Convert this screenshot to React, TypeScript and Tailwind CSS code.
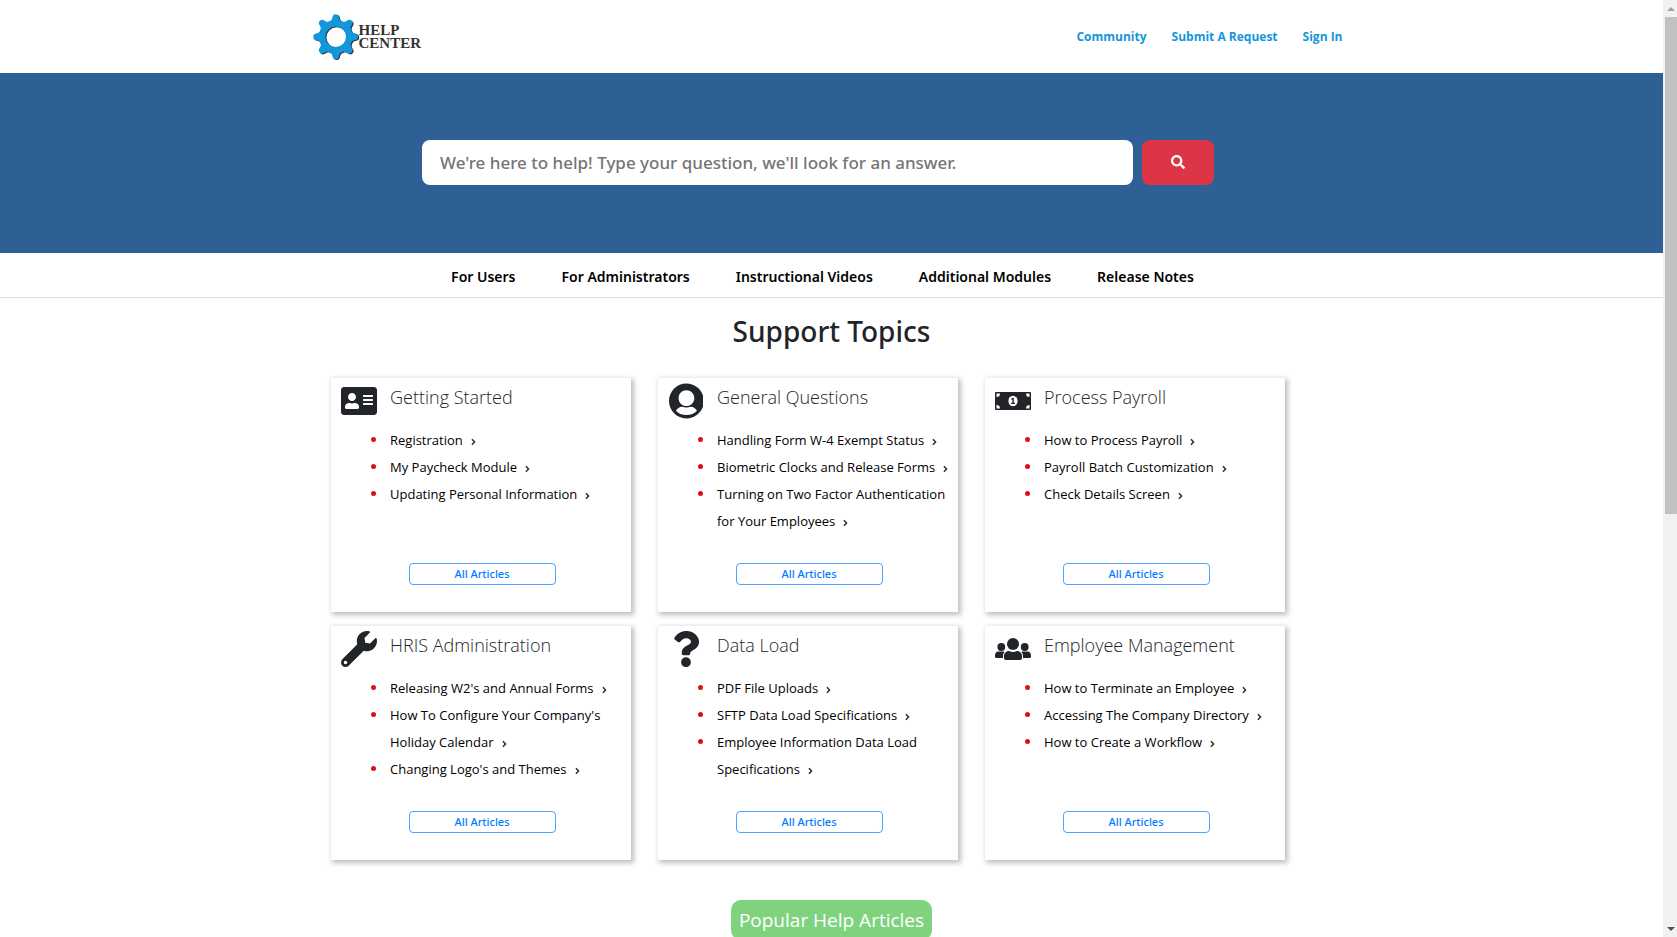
import React from "react";
import {
  FaAddressCard,
  FaAngleRight,
  FaQuestion,
  FaSearch,
  FaWrench,
} from "react-icons/fa";

type Topic = {
  title: string;
  icon: React.ReactNode;
  articles: string[];
};

const UserCircleIcon = () => (
  <svg viewBox="0 0 496 512" className="h-9" fill="currentColor">
    <path d="M248 8C111 8 0 119 0 256s111 248 248 248 248-111 248-248S385 8 248 8zm0 448c-62 0-116-22-150-62 18-32 50-54 88-56 20 7 41 11 62 11s42-4 62-11c38 2 70 24 88 56-34 40-88 62-150 62zm0-352c62 0 112 50 112 112s-50 112-112 112-112-50-112-112 50-112 112-112z" />
  </svg>
);

const MoneyIcon = () => (
  <svg viewBox="0 0 36 18" className="w-9">
    <rect width="36" height="18" rx="1" fill="currentColor" />
    <path
      d="M1.5 1.5h3.5a3.5 3.5 0 0 1-3.5 3.5zM34.500 1.500v3.500a3.500 3.500 0 0 1-3.500-3.500zM1.500 16.500v-3.500a3.500 3.500 0 0 1 3.500 3.500zM34.500 16.500h-3.500a3.500 3.500 0 0 1 3.500-3.500z"
      fill="#fff"
    />
    <ellipse cx="18" cy="9" rx="4.600" ry="5.200" fill="#fff" />
    <path d="M16.200 6.800l1.600-1h1v5h1.200v1.200h-3.900v-1.200h1.300V7.400l-1.200.4z" fill="currentColor" />
  </svg>
);

const UsersIcon = () => (
  <svg viewBox="0 0 36 22" className="w-9" fill="currentColor">
    <circle cx="18" cy="6" r="6" />
    <circle cx="6.300" cy="9" r="3.900" />
    <circle cx="29.700" cy="9" r="3.900" />
    <path d="M9 18.500c0-3.200 2-5.500 5-5.500 1.300.7 2.600 1 4 1s2.700-.3 4-1c3 0 5 2.300 5 5.500V20c0 1.200-.8 2-2 2H11c-1.200 0-2-.8-2-2z" />
    <path d="M0 17.500C0 15.200 1.600 13.600 3.600 13.600h4.800c.4 0 .8.100 1.200.2C8.500 15 8 16.500 8 18.500V20H1.200C.5 20 0 19.500 0 18.800zM36 17.500c0-2.300-1.600-3.900-3.600-3.900h-4.800c-.4 0-.8.100-1.200.2 1.100 1.200 1.600 2.700 1.600 4.700V20h6.800c.7 0 1.200-.5 1.200-1.200z" />
  </svg>
);

const topics: Topic[] = [
  {
    title: "Getting Started",
    icon: <FaAddressCard className="size-9" />,
    articles: ["Registration", "My Paycheck Module", "Updating Personal Information"],
  },
  {
    title: "General Questions",
    icon: <UserCircleIcon />,
    articles: [
      "Handling Form W-4 Exempt Status",
      "Biometric Clocks and Release Forms",
      "Turning on Two Factor Authentication for Your Employees",
    ],
  },
  {
    title: "Process Payroll",
    icon: <MoneyIcon />,
    articles: ["How to Process Payroll", "Payroll Batch Customization", "Check Details Screen"],
  },
  {
    title: "HRIS Administration",
    icon: <FaWrench className="size-9" />,
    articles: [
      "Releasing W2's and Annual Forms",
      "How To Configure Your Company's Holiday Calendar",
      "Changing Logo's and Themes",
    ],
  },
  {
    title: "Data Load",
    icon: <FaQuestion className="size-9" />,
    articles: [
      "PDF File Uploads",
      "SFTP Data Load Specifications",
      "Employee Information Data Load Specifications",
    ],
  },
  {
    title: "Employee Management",
    icon: <UsersIcon />,
    articles: [
      "How to Terminate an Employee",
      "Accessing The Company Directory",
      "How to Create a Workflow",
    ],
  },
];

const navLinks = [
  "For Users",
  "For Administrators",
  "Instructional Videos",
  "Additional Modules",
  "Release Notes",
];

const userLinks = ["Community", "Submit A Request", "Sign In"];

const gearAngles = [0, 45, 90, 135, 180, 225, 270, 315];

const GearShape = () => (
  <>
    <circle r="13.500" fill="none" strokeWidth="6.500" stroke="currentColor" />
    {gearAngles.map((angle) => (
      <path
        key={angle}
        transform={`rotate(${angle})`}
        d="M-7-14.500C-4-16-3.500-18-3-20.500Q-2.600-22.500 0-22.500T3-20.500C3.500-18 4-16 7-14.500L5-12H-5z"
        fill="currentColor"
      />
    ))}
  </>
);

const Logo = () => (
  <a href="#" aria-label="Help Center" className="flex items-center">
    <svg viewBox="-23 -23 46 46" className="size-[46px]">
      <g className="text-[#26323a]" transform="translate(0.7 0.5)">
        <GearShape />
      </g>
      <g className="text-[#1496db]" transform="translate(-0.3 -0.3)">
        <GearShape />
      </g>
    </svg>
    <span className="flex flex-col font-['Liberation_Serif',serif] text-[15px] leading-[13px] font-bold text-[#333]">
      <span>HELP</span>
      <span>CENTER</span>
    </span>
  </a>
);

const TopicCard = ({ title, icon, articles }: Topic) => (
  <section className="flex min-h-[234px] flex-col bg-white pt-[3px] pr-2 pb-[27px] pl-2.5 shadow-[2px_2px_5px_1px_rgba(0,0,0,0.25)]">
    <div className="flex gap-[13px]">
      <div className="flex h-10 w-9 shrink-0 items-center justify-center">{icon}</div>
      <h3 className="text-lg leading-8 font-light">{title}</h3>
    </div>
    <ul className="mt-1.5 mb-3 ml-[49px] text-[13px] leading-[27px] text-black">
      {articles.map((article) => (
        <li key={article} className="relative">
          <span className="absolute top-[10px] -left-[19px] size-[5px] rounded-full bg-[#e01010]" />
          <a href="#">
            {article}
            <FaAngleRight className="ml-2 inline h-2.5 w-[5px] text-[#333]" />
          </a>
        </li>
      ))}
    </ul>
    <button className="mx-auto mt-auto h-[22px] w-[147px] rounded border border-[#4da3ff] font-['Noto_Sans',sans-serif] text-[11px] leading-5 font-medium text-[#007bff]">
      All Articles
    </button>
  </section>
);

const ScrollTrack = () => (
  <div className="flex w-3.5 shrink-0 flex-col items-end bg-[#f1f1f1]">
    <svg viewBox="0 0 12 17" className="h-[17px] w-3" fill="#a3a3a3">
      <path d="M2 11h8L6 7z" />
    </svg>
    <div className="h-[53%] w-3 bg-[#c1c1c1]" />
    <svg viewBox="0 0 12 17" className="mt-auto h-[17px] w-3" fill="#505050">
      <path d="M2 7h8l-4 4z" />
    </svg>
  </div>
);

const App = () => {
  return (
    <div className="flex h-screen bg-white font-['Open_Sans','Noto_Sans',sans-serif] text-[#212529]">
      <div className="flex-1 overflow-hidden">
        {/* HEADER */}
        <header className="mx-auto flex h-[73px] max-w-[1038px] items-center justify-between pr-2">
          <Logo />
          <div className="flex gap-[25px] text-xs font-bold text-[#1496db]">
            {userLinks.map((link) => (
              <a href="#" key={link}>
                {link}
              </a>
            ))}
          </div>
        </header>
        {/* SEARCH */}
        <div className="flex h-[180px] items-center justify-center bg-[#2e6095] pr-[27px] pb-0.5">
          <form className="flex w-[792px] gap-[9px]" onSubmit={(e) => e.preventDefault()}>
            <input
              type="text"
              aria-label="Search"
              placeholder="We're here to help! Type your question, we'll look for an answer."
              className="h-[45px] min-w-0 flex-1 rounded-lg bg-white px-[18px] font-['Noto_Sans',sans-serif] text-[17px] font-medium placeholder:text-[#757575]"
            />
            <button
              aria-label="Search"
              className="flex w-[72px] items-center justify-center rounded-lg bg-[#dc3545] text-white"
            >
              <FaSearch className="size-3.5" />
            </button>
          </form>
        </div>
        {/* NAV */}
        <nav className="flex h-[45px] items-center justify-center gap-[46px] border-b border-[#dedede] pt-[3px] pr-[18px] font-['Noto_Sans',sans-serif] text-sm font-semibold text-black">
          {navLinks.map((link) => (
            <a href="#" key={link}>
              {link}
            </a>
          ))}
        </nav>
        {/* TOPICS */}
        <main>
          <h2 className="pt-2.5 pb-6 text-center font-['Noto_Sans',sans-serif] text-[28px] leading-[46px] font-medium">
            Support Topics
          </h2>
          <div className="mx-auto grid max-w-[1001px] grid-cols-3 gap-x-[27px] gap-y-3.5 pr-[47px]">
            {topics.map((topic) => (
              <TopicCard key={topic.title} {...topic} />
            ))}
          </div>
          <div className="mt-10 flex justify-center">
            <h2 className="rounded-[10px] bg-[#7fd37f] px-2 text-[19px] leading-10 text-white">
              Popular Help Articles
            </h2>
          </div>
        </main>
      </div>
      <ScrollTrack />
    </div>
  );
};

export default App;
